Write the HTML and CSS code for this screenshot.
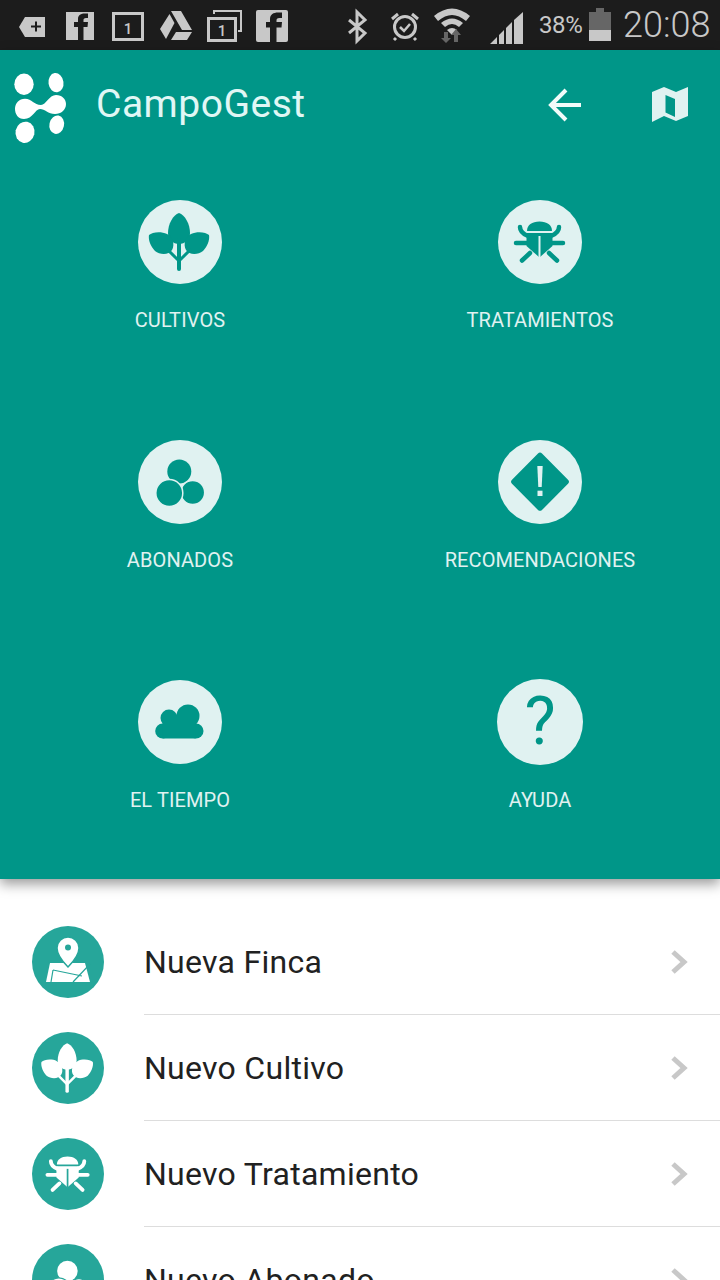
FILE: index.html
```html
<!DOCTYPE html>
<html lang="es">
<head>
    <meta charset="UTF-8">
    <meta name="viewport" content="width=device-width, initial-scale=1.0">
    <title>CampoGest</title>
    <link rel="stylesheet" href="styles.css">
</head>
<body>
    <svg class="defs" width="0" height="0">
        <symbol id="ico-leaf" viewBox="0 0 84 84">
            <path class="fg" d="M41 13C47 15 52 24 52 33C52 40 47 44 41 44C35 44 30 40 30 33C30 24 35 15 41 13Z"/>
            <path class="fg" d="M11 35C14 32 23 31 29 34C35 37 37 45 34 50C31 55 22 55 17 51C13 47 10 40 11 35Z"/>
            <path class="fg" d="M71 35C68 32 59 31 53 34C47 37 45 45 48 50C51 55 60 55 65 51C69 47 72 40 71 35Z"/>
            <path class="line" stroke-width="4" d="M41 40V69"/>
            <path class="line" stroke-width="3" d="M30 50L41 61L52 50"/>
        </symbol>
        <symbol id="ico-bug" viewBox="0 0 84 84">
            <path class="fg" d="M29 31C29 25 34 21.500 41.500 21.500C49 21.500 54 25 54 31Z"/>
            <path class="fg" d="M28.500 33H54.500V46L41.500 57.500L28.500 46Z"/>
            <path class="cut" stroke-width="2" d="M41.500 36V58"/>
            <path class="line" stroke-width="4.500" d="M22 27C22 31 25 34 30 36M61 27C61 31 58 34 53 36M18 43H30M53 43H65M24 60.500L32 53M59 60.500L51 53"/>
        </symbol>
        <symbol id="ico-drops" viewBox="0 0 84 84">
            <circle class="fg" cx="41.300" cy="31.500" r="12"/>
            <circle class="fg ring" cx="54.700" cy="52.500" r="12"/>
            <circle class="fg ring" cx="31.300" cy="53" r="13.500"/>
        </symbol>
        <symbol id="ico-warn" viewBox="0 0 84 84">
            <path class="fg" d="M40 13.500Q42 11.700 44 13.500L70 39.700Q72 41.700 70 43.700L44 69.900Q42 71.700 40 69.900L14 43.700Q12 41.700 14 39.700Z"/>
            <path class="hole" d="M39.300 26H44.700L43.700 47H40.300Z"/>
            <rect class="hole" x="39.500" y="50.700" width="5" height="5.300"/>
        </symbol>
        <symbol id="ico-cloud" viewBox="0 0 84 84">
            <circle class="fg" cx="31" cy="38" r="8.500"/>
            <circle class="fg" cx="50" cy="36" r="11.500"/>
            <circle class="fg" cx="58" cy="51" r="7.500"/>
            <circle class="fg" cx="24.700" cy="51" r="7.500"/>
            <rect class="fg" x="24.700" y="38" width="33" height="20.500"/>
        </symbol>
        <symbol id="ico-farm" viewBox="0 0 72 72">
            <path class="fg" d="M18 37H53L58 56H14Z"/>
            <path class="cut" stroke-width="1.200" d="M21 44L19 56M21 44L50 50M58 38L41 56"/>
            <path class="fg ring" d="M36 11C42 11 47 16 47 22C47 29 40 37 36 41C32 37 25 29 25 22C25 16 30 11 36 11Z"/>
            <circle class="cut-fill" cx="36" cy="21.500" r="3"/>
        </symbol>
    </svg>

    <div class="status-bar">
        <svg class="status-left" viewBox="0 0 300 50" width="300" height="50">
            <path class="st" d="M25 17H45V37H25L19 27Z"/>
            <path class="st-cut" d="M31 25.500H35V21.500H37V25.500H41V27.500H37V31.500H35V27.500H31Z"/>

            <rect class="st" x="66" y="12" width="28" height="28"/>
            <path class="st-cut" d="M78 40V27H74V22H78V19C78 15 81 13.500 85 13.500H88V18H86C84 18 83.500 19 83.500 20V22H88L87.500 27H83.500V40Z"/>

            <rect class="st-out" x="113.500" y="13.500" width="29" height="26" stroke-width="3"/>
            <text class="st-num" x="128" y="34">1</text>

            <path class="st" d="M171 11H181L192 30H182ZM169.500 14L174.500 23L166 39L160 29ZM176 32H192L187 40H171Z"/>

            <path class="st-line" stroke-width="2" d="M214 14V11H241V31H238"/>
            <rect class="st-out" x="208.500" y="18.500" width="27" height="22" stroke-width="3"/>
            <text class="st-num" x="222" y="36">1</text>

            <rect class="st" x="256" y="10" width="32" height="32" rx="2"/>
            <path class="st-cut" d="M270 42V27.500H266V22H270V19C270 14.500 273.500 12.500 278 12.500H282V18H279.500C277 18 276.500 19 276.500 20.500V22H282L281.500 27.500H276.500V42Z"/>
        </svg>
        <svg class="status-sys" viewBox="340 0 190 50" width="190" height="50">
            <path class="st-line" stroke-width="3" d="M349 20L365 33L357 41V12L365 20L349 33"/>

            <circle class="st-line" stroke-width="3" cx="405" cy="27" r="10.500"/>
            <path class="st-line" stroke-width="2.500" d="M400 27L404 31L410 24"/>
            <path class="st-line" stroke-width="3" d="M392 19L398 14M418 19L412 14M396 38L394 40M414 38L416 40"/>

            <path class="st" d="M434 16Q452 1 470 16L466 21Q452 9 438 21Z"/>
            <path class="st" d="M441 23Q452 14 463 23L459 27Q452 21 445 27Z"/>
            <path class="st" d="M447 30Q452 26 457 30L452 35Z"/>
            <path class="st-dim" d="M444 32H448V38H451L446 43L441 38H444ZM456 29L461 35H458V42H454V35H451Z"/>

            <path class="st" d="M490 44L497 37V44ZM499 35L504 30V44H499ZM506 28L512 22V44H506ZM514 20L523 12V44H514Z"/>
        </svg>
        <span class="status-pct">38%</span>
        <svg class="status-batt" viewBox="0 0 22 33" width="22" height="33">
            <path class="st-dim" d="M7 0H15V4H22V22H0V4H7Z"/>
            <rect class="st" y="22" width="22" height="11"/>
        </svg>
        <span class="status-time">20:08</span>
    </div>

    <div class="panel">
        <div class="app-bar">
            <svg class="logo" viewBox="0 0 60 80" width="60" height="80">
                <ellipse cx="14" cy="15.300" rx="9.700" ry="10.700"/>
                <ellipse cx="46" cy="13.700" rx="7.500" ry="9.700" transform="rotate(-8 46 13.700)"/>
                <path d="M15 29.700C22 29.700 24 36 31 36C36 36 39 26 46 26C52 26 56 30 56 35C56 41 51 45 45 45C38 45 35 40 30 40C25 40 23 50 14 50C8 50 5 45 5 40C5 34 9 29.700 15 29.700Z"/>
                <ellipse cx="15" cy="63.300" rx="9.500" ry="10.700" transform="rotate(12 15 63.300)"/>
                <ellipse cx="46.700" cy="55.700" rx="7.300" ry="9.300" transform="rotate(12 46.700 55.700)"/>
            </svg>
            <span class="app-title">CampoGest</span>
            <svg class="back" viewBox="0 0 36 36" width="36" height="36">
                <path d="M34 18H4M19 3L4 18L19 33"/>
            </svg>
            <svg class="map" viewBox="0 0 38 38" width="38" height="38">
                <path fill-rule="evenodd" d="M0 5L12 0L24 5L36 0V29L24 34L12 29L0 35ZM13.500 8V25.500L23 30V12Z"/>
            </svg>
        </div>

        <div class="menu-grid">
            <div class="menu-item">
                <div class="disc"><svg class="glyph"><use href="#ico-leaf"/></svg></div>
                <span class="menu-label">CULTIVOS</span>
            </div>
            <div class="menu-item">
                <div class="disc"><svg class="glyph"><use href="#ico-bug"/></svg></div>
                <span class="menu-label">TRATAMIENTOS</span>
            </div>
            <div class="menu-item">
                <div class="disc"><svg class="glyph"><use href="#ico-drops"/></svg></div>
                <span class="menu-label">ABONADOS</span>
            </div>
            <div class="menu-item">
                <div class="disc"><svg class="glyph"><use href="#ico-warn"/></svg></div>
                <span class="menu-label">RECOMENDACIONES</span>
            </div>
            <div class="menu-item">
                <div class="disc"><svg class="glyph"><use href="#ico-cloud"/></svg></div>
                <span class="menu-label">EL TIEMPO</span>
            </div>
            <div class="menu-item">
                <div class="disc disc-help"><span class="disc-mark">?</span></div>
                <span class="menu-label">AYUDA</span>
            </div>
        </div>
    </div>

    <div class="list">
        <div class="row">
            <div class="row-disc"><svg class="row-glyph"><use href="#ico-farm"/></svg></div>
            <div class="row-main">
                <span class="row-text">Nueva Finca</span>
                <svg class="chev" viewBox="0 0 18 26" width="18" height="26"><path d="M3 3L14 13L3 23"/></svg>
            </div>
        </div>
        <div class="row">
            <div class="row-disc"><svg class="row-glyph"><use href="#ico-leaf"/></svg></div>
            <div class="row-main">
                <span class="row-text">Nuevo Cultivo</span>
                <svg class="chev" viewBox="0 0 18 26" width="18" height="26"><path d="M3 3L14 13L3 23"/></svg>
            </div>
        </div>
        <div class="row">
            <div class="row-disc"><svg class="row-glyph"><use href="#ico-bug"/></svg></div>
            <div class="row-main">
                <span class="row-text">Nuevo Tratamiento</span>
                <svg class="chev" viewBox="0 0 18 26" width="18" height="26"><path d="M3 3L14 13L3 23"/></svg>
            </div>
        </div>
        <div class="row">
            <div class="row-disc"><svg class="row-glyph"><use href="#ico-drops"/></svg></div>
            <div class="row-main">
                <span class="row-text">Nuevo Abonado</span>
                <svg class="chev" viewBox="0 0 18 26" width="18" height="26"><path d="M3 3L14 13L3 23"/></svg>
            </div>
        </div>
    </div>
</body>
</html>
```

FILE: styles.css
```css
html, body { margin: 0; padding: 0; }
body { width: 720px; height: 1280px; overflow: hidden; background: #fff; font-family: Roboto, sans-serif; }
.defs { position: absolute; }

/* icon parts, colours come from the disc they sit in */
.fg { fill: var(--fg); }
.ring { stroke: var(--bg); stroke-width: 1.5; }
.line { fill: none; stroke: var(--fg); stroke-linecap: round; }
.cut { fill: none; stroke: var(--bg); }
.cut-fill, .hole { fill: var(--bg); }

/* status bar */
.status-bar { display: flex; align-items: center; height: 50px; background: #1c1c1c; color: #c8c8c8; }
.status-left { flex: none; }
.status-sys { flex: none; margin-left: 40px; }
.status-pct { flex: none; width: 50px; font-size: 24px; letter-spacing: -0.4px; margin-left: 9px; }
.status-batt { flex: none; margin-top: -1px; }
.status-time { font-size: 36px; font-weight: 300; margin-left: 12px; white-space: nowrap; }
.st { fill: #c8c8c8; }
.st-cut { fill: #1c1c1c; }
.st-dim { fill: #666; }
.st-out { fill: #1c1c1c; stroke: #c8c8c8; }
.st-line { fill: none; stroke: #c8c8c8; }
.st-num { fill: #c8c8c8; font-size: 15px; font-weight: 500; text-anchor: middle; }

/* teal panel */
.panel { position: relative; z-index: 1; height: 829px; background: #009688; box-shadow: 0 5px 12px rgba(0,0,0,0.4); }
.app-bar { display: flex; align-items: center; height: 110px; padding-left: 10px; }
.logo { flex: none; fill: #fff; margin-top: 7px; }
.app-title { flex: 1; font-size: 39px; letter-spacing: 0.5px; line-height: 46px; color: #e0f7f5; margin: -2px 0 0 26px; }
.back { flex: none; fill: none; stroke: #f2fbfa; stroke-width: 4; }
.map { flex: none; fill: #e0f2f1; margin-left: 69px; margin-right: 30px; margin-top: 1px; }

.menu-grid { display: grid; grid-template-columns: 360px 360px; grid-auto-rows: 240px; margin-top: 40px; }
.menu-item { display: flex; flex-direction: column; align-items: center; }
.disc { --fg: #009688; --bg: #e0f2f1; display: flex; align-items: center; justify-content: center; width: 84px; height: 84px; border-radius: 50%; background: #e0f2f1; }
.disc-help { width: 86px; height: 86px; margin: -1px 0; }
.glyph { display: block; width: 84px; height: 84px; }
.disc-mark { font-size: 66px; line-height: 84px; color: #009688; }
.menu-label { margin-top: 23px; font-size: 20px; letter-spacing: 0.1px; line-height: 26px; color: #e0f2f1; white-space: nowrap; }

/* list below the panel */
.list { padding-top: 30px; }
.row { display: flex; height: 106px; }
.row-disc { --fg: #fff; --bg: #26a69a; flex: none; width: 72px; height: 72px; margin: 17px 40px 0 32px; border-radius: 50%; background: #26a69a; }
.row-glyph { display: block; width: 72px; height: 72px; }
.row-main { flex: 1; display: flex; align-items: center; justify-content: space-between; border-bottom: 1px solid #ddd; padding-right: 32px; }
.row-text { font-size: 32px; letter-spacing: 0.28px; color: #212121; white-space: nowrap; }
.chev { flex: none; fill: none; stroke: #c8c8c8; stroke-width: 5; }
```
